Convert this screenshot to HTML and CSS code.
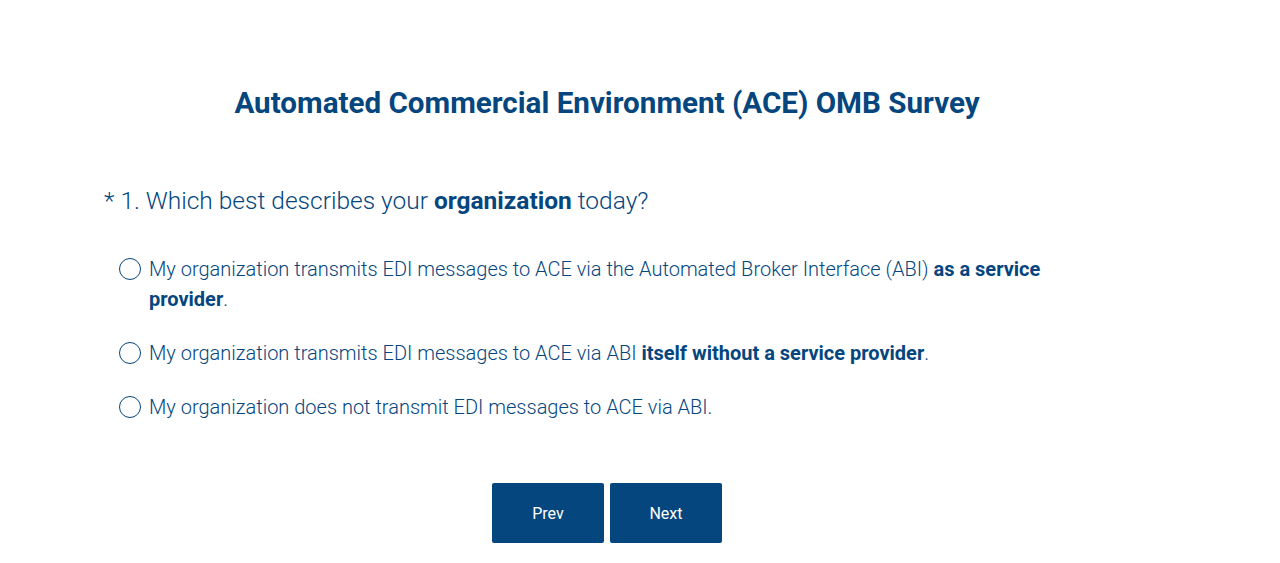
FILE: index.html
```html
<!DOCTYPE html>
<html lang="en">
<head>
    <meta charset="UTF-8">
    <meta name="viewport" content="width=device-width, initial-scale=1.0">
    <title>ACE OMB Survey</title>
    <link rel="stylesheet" href="styles.css">
</head>
<body>
    <div class="survey">
        <h1 class="survey-title">Automated Commercial Environment (ACE) OMB Survey</h1>

        <form id="surveyForm">
            <div class="question">
                <h2 class="question-title">
                    <span class="required">*</span> 1. Which best describes your <strong>organization</strong> today?
                </h2>

                <label class="answer">
                    <input type="radio" name="q1" value="provider">
                    <span class="radio"></span>
                    <span class="answer-text">My organization transmits EDI messages to ACE via the Automated Broker Interface (ABI) <strong>as a service provider</strong>.</span>
                </label>
                <label class="answer">
                    <input type="radio" name="q1" value="self">
                    <span class="radio"></span>
                    <span class="answer-text">My organization transmits EDI messages to ACE via ABI <strong>itself without a service provider</strong>.</span>
                </label>
                <label class="answer">
                    <input type="radio" name="q1" value="none">
                    <span class="radio"></span>
                    <span class="answer-text">My organization does not transmit EDI messages to ACE via ABI.</span>
                </label>
            </div>

            <div class="nav-buttons">
                <button type="button" class="btn">Prev</button>
                <button type="submit" class="btn">Next</button>
            </div>
        </form>
    </div>
</body>
</html>
```

FILE: styles.css
```css
body {
    font-family: Roboto, "Liberation Sans", sans-serif;
    margin: 0;
    padding: 0;
    color: #05467e;
    background: #fff;
}
.survey {
    width: 1006px;
    margin-left: 104px;
    padding-top: 83px;
}
.survey-title {
    margin: 0;
    text-align: center;
    font-size: 29.6px;
    line-height: 40px;
    font-weight: 700;
}
.question {
    margin-top: 61px;
}
.question-title {
    margin: 0 0 36px;
    font-size: 24.5px;
    line-height: 34px;
    font-weight: 300;
}
.question-title strong {
    font-weight: 700;
}
.answer {
    display: flex;
    align-items: flex-start;
    gap: 8px;
    padding-left: 15px;
    margin-bottom: 24px;
    font-size: 20px;
    line-height: 30px;
    font-weight: 300;
    cursor: pointer;
}
.answer:last-child {
    margin-bottom: 0;
}
.answer input {
    display: none;
}
.radio {
    flex: none;
    width: 20px;
    height: 20px;
    margin-top: 4px;
    border: 1.5px solid #05467e;
    border-radius: 50%;
}
.answer-text {
    width: 900px;
}
.answer-text strong {
    font-weight: 700;
}
.nav-buttons {
    display: flex;
    justify-content: center;
    gap: 6px;
    margin-top: 61px;
}
.btn {
    width: 112px;
    height: 60px;
    border: none;
    border-radius: 2px;
    background-color: #05467e;
    color: #fff;
    font-family: Roboto, sans-serif;
    font-size: 16px;
    font-weight: 400;
    cursor: pointer;
}
.btn:hover {
    background-color: #043868;
}
```
